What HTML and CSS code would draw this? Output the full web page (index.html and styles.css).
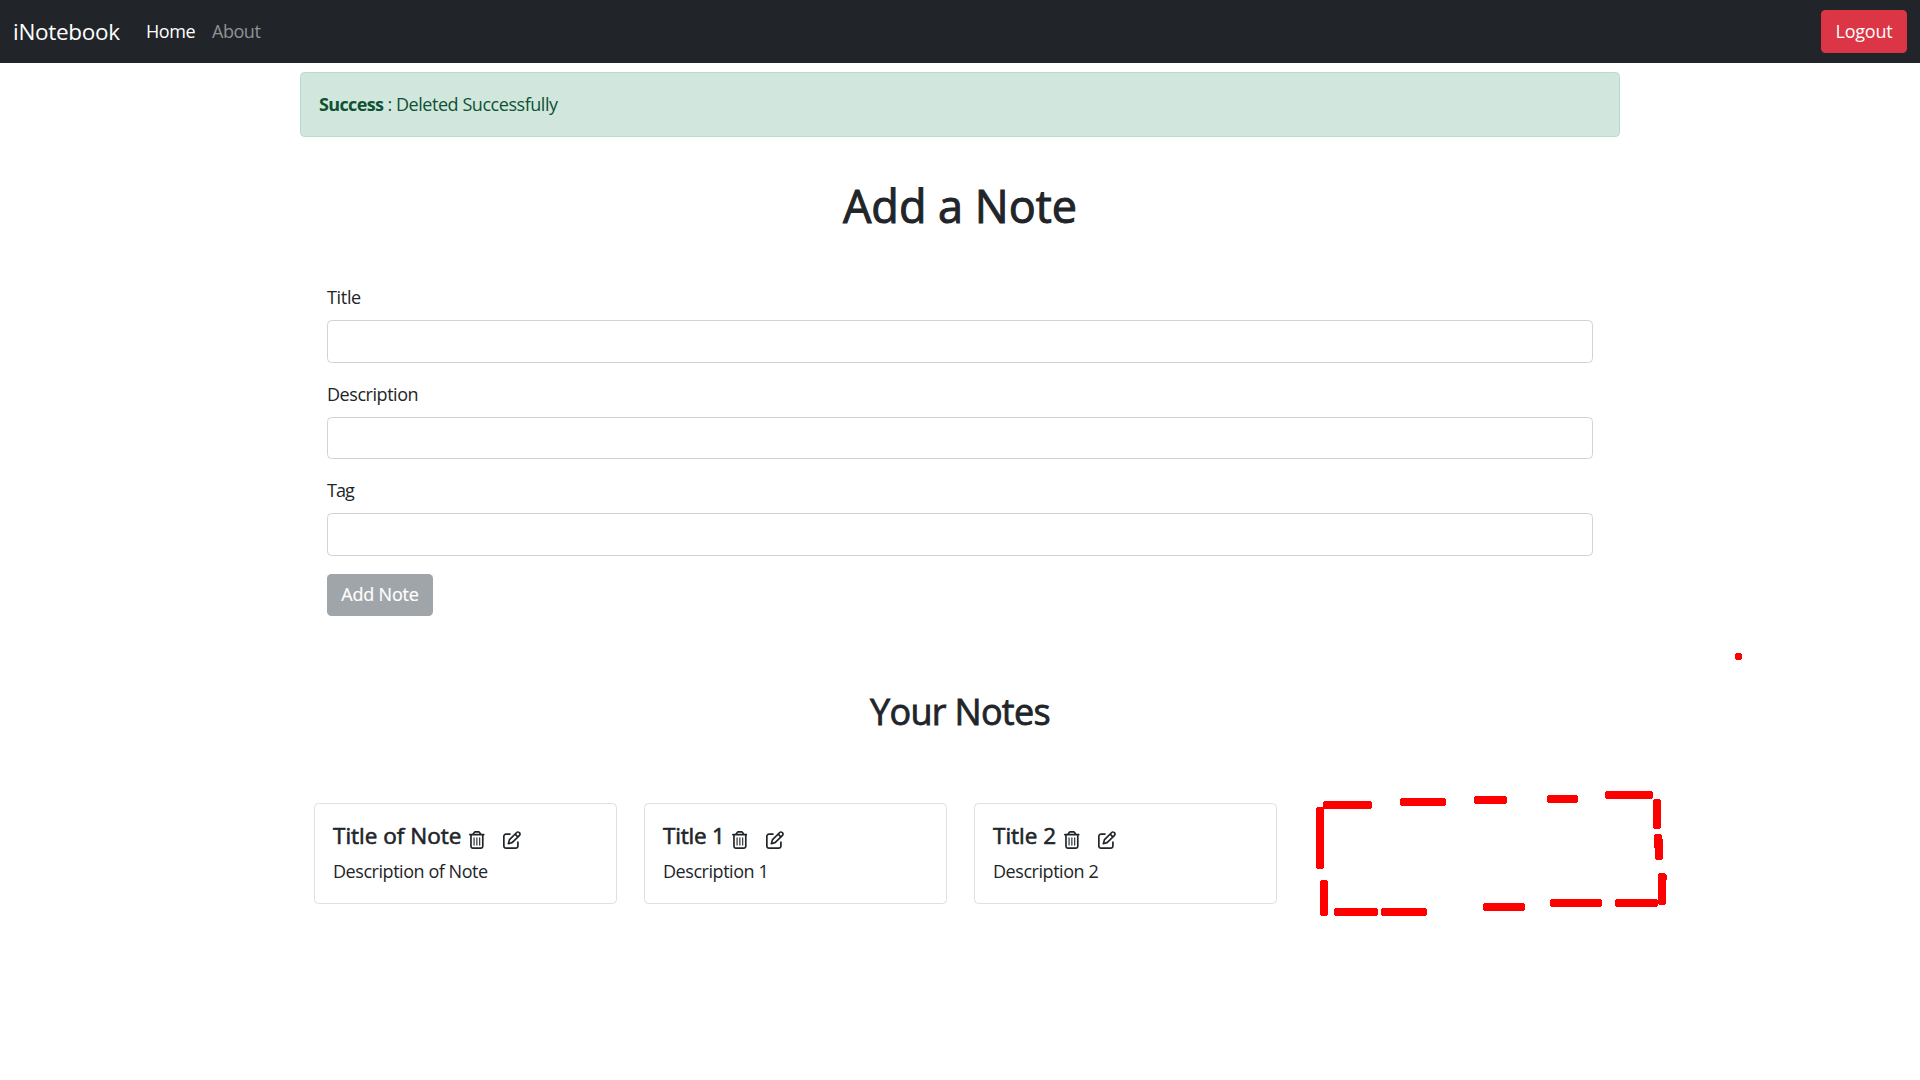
FILE: index.html
```
<!DOCTYPE html>
<html lang="en">
<head>
<meta charset="utf-8">
<title>iNotebook</title>
<link rel="stylesheet" href="styles.css">
</head>
<body>
<svg class="defs" aria-hidden="true">
  <symbol id="trash" viewBox="0 0 448 512"><path d="M170.500 51.600L151.500 80l145 0-19-28.400c-1.500-2.200-4-3.600-6.700-3.600l-93.700 0c-2.700 0-5.200 1.300-6.700 3.600zm147-26.600L354.200 80 368 80l48 0 8 0c13.300 0 24 10.700 24 24s-10.700 24-24 24l-8 0 0 304c0 44.200-35.800 80-80 80l-224 0c-44.200 0-80-35.800-80-80l0-304-8 0c-13.300 0-24-10.700-24-24S10.700 80 24 80l8 0 48 0 13.800 0 36.700-55.100C140.900 9.400 158.400 0 177.100 0l93.700 0c18.700 0 36.200 9.400 46.600 24.900zM80 128l0 304c0 17.700 14.300 32 32 32l224 0c17.700 0 32-14.300 32-32l0-304L80 128zm80 64l0 208c0 8.800-7.200 16-16 16s-16-7.200-16-16l0-208c0-8.800 7.200-16 16-16s16 7.200 16 16zm80 0l0 208c0 8.800-7.200 16-16 16s-16-7.200-16-16l0-208c0-8.800 7.200-16 16-16s16 7.200 16 16zm80 0l0 208c0 8.800-7.200 16-16 16s-16-7.200-16-16l0-208c0-8.800 7.200-16 16-16s16 7.200 16 16z"/></symbol>
  <symbol id="edit" viewBox="0 0 512 512"><path d="M441 58.900L453.100 71c9.400 9.400 9.400 24.600 0 33.900L424 134.100 377.900 88 407 58.900c9.400-9.400 24.600-9.400 33.900 0zM209.800 256.200L344 121.900 390.100 168 255.800 302.200c-2.900 2.900-6.500 5-10.400 6.100l-58.500 16.700 16.700-58.500c1.100-3.900 3.200-7.500 6.100-10.400zM373.100 25L175.800 222.200c-8.700 8.700-15 19.400-18.300 31.100l-28.600 100c-2.400 8.400-.1 17.400 6.100 23.600s15.200 8.500 23.600 6.100l100-28.600c11.800-3.400 22.500-9.700 31.100-18.300L487 138.900c28.100-28.100 28.100-73.700 0-101.800L474.900 25C446.800-3.100 401.200-3.100 373.100 25zM88 64C39.400 64 0 103.400 0 152V424c0 48.600 39.400 88 88 88H360c48.600 0 88-39.400 88-88V312c0-13.300-10.700-24-24-24s-24 10.700-24 24V424c0 22.100-17.900 40-40 40H88c-22.100 0-40-17.900-40-40V152c0-22.100 17.900-40 40-40H200c13.300 0 24-10.700 24-24s-10.700-24-24-24H88z"/></symbol>
</svg>
<nav class="navbar">
  <a class="brand">iNotebook</a>
  <a class="nav-link active">Home</a>
  <a class="nav-link">About</a>
  <button class="btn btn-danger">Logout</button>
</nav>
<main class="container">
  <div class="alert"><strong>Success</strong> <span>: Deleted Successfully</span></div>
  <h1>Add a Note</h1>
  <form class="form">
    <label class="label label-title" for="title">Title</label>
    <input class="input" id="title">
    <label class="label" for="description">Description</label>
    <input class="input input-description" id="description">
    <label class="label label-tag" for="tag">Tag</label>
    <input class="input" id="tag">
    <button class="btn btn-add" type="button" disabled>Add Note</button>
  </form>
  <h2>Your Notes</h2>
  <section class="notes">
    <article class="card">
      <div class="card-head"><h5>Title of Note</h5><svg class="trash"><use href="#trash"/></svg><svg class="edit"><use href="#edit"/></svg></div>
      <p>Description of Note</p>
    </article>
    <article class="card">
      <div class="card-head"><h5 class="short">Title 1</h5><svg class="trash"><use href="#trash"/></svg><svg class="edit"><use href="#edit"/></svg></div>
      <p>Description 1</p>
    </article>
    <article class="card">
      <div class="card-head"><h5>Title 2</h5><svg class="trash"><use href="#trash"/></svg><svg class="edit"><use href="#edit"/></svg></div>
      <p>Description 2</p>
    </article>
  </section>
</main>
<svg class="marker" viewBox="0 0 1920 1080">
  <rect x="1323" y="801" width="49" height="8" rx="2.500"/>
  <rect x="1400" y="798" width="46" height="8" rx="2.500"/>
  <rect x="1474" y="796" width="33" height="8" rx="2.500"/>
  <rect x="1547" y="795" width="31" height="8" rx="2.500"/>
  <rect x="1605" y="791" width="48" height="8" rx="2.500"/>
  <rect x="1653" y="799" width="8" height="30" rx="2.500"/>
  <rect x="1654" y="834" width="8" height="15" rx="2.500"/>
  <rect x="1655" y="838" width="8" height="22" rx="2.500"/>
  <rect x="1658" y="873" width="8" height="32" rx="2.500"/>
  <rect x="1660" y="875" width="7" height="5" rx="1"/>
  <rect x="1316" y="807" width="8" height="62" rx="2.500"/>
  <rect x="1320" y="880" width="8" height="36" rx="2.500"/>
  <rect x="1334" y="908" width="44" height="8" rx="2.500"/>
  <rect x="1381" y="908" width="46" height="8" rx="2.500"/>
  <rect x="1483" y="903" width="42" height="8" rx="2.500"/>
  <rect x="1550" y="899" width="52" height="8" rx="2.500"/>
  <rect x="1615" y="899" width="43" height="8" rx="2.500"/>
  <rect x="1735" y="653" width="7" height="7" rx="2.200"/>
</svg>
</body>
</html>
```
FILE: styles.css
```
* { box-sizing: border-box; }
body {
  margin: 0;
  height: 1080px;
  overflow: hidden;
  background: #fff;
  color: #212529;
  font: 400 18px/27px "Open Sans", "Segoe UI", sans-serif;
  letter-spacing: -0.45px;
}
.defs { display: none; }
h1, h2, h5, p { margin: 0; font-weight: 400; }

.navbar {
  display: flex;
  align-items: center;
  height: 63px;
  padding: 0 13px;
  background: #212529;
}
.brand { width: 133px; font-size: 22.5px; letter-spacing: -0.3px; color: #fff; }
.nav-link { width: 66px; color: #909294; }
.nav-link.active { color: #fff; }
.btn {
  display: block;
  height: 43px;
  padding: 0;
  border: 0;
  border-radius: 4.5px;
  color: #fff;
  font: inherit;
  letter-spacing: -0.2px;
  text-align: center;
}
.btn-danger { width: 86px; margin-left: auto; background: #dc3545; }

.container { width: 1320px; margin: 9px auto 0; }
.alert {
  height: 65px;
  padding: 18px;
  border: 1px solid #badbcc;
  border-radius: 4.5px;
  background: #d1e7dd;
  color: #0f5132;
}
.alert strong { font-weight: 700; letter-spacing: -0.650px; }
h1 {
  margin-top: 42px;
  font-size: 45px;
  line-height: 54px;
  letter-spacing: 0;
  text-align: center;
  -webkit-text-stroke: 1px #212529;
}
.form { display: flex; flex-direction: column; margin: 51px 27px 0; }
.label { margin-bottom: 9px; }
.label-title { letter-spacing: -0.330px; }
.label-tag { letter-spacing: -0.9px; }
.input {
  height: 43px;
  margin: 0 0 18px;
  padding: 0;
  border: 1px solid #ced4da;
  border-radius: 4.5px;
  background: #fff;
}
.input-description { height: 42px; }
.btn-add { width: 106px; height: 42px; padding-bottom: 1px; background: #a0a5aa; -webkit-text-stroke: 0.2px #fff; }
h2 {
  margin-top: 74px;
  font-size: 36px;
  line-height: 43px;
  letter-spacing: -0.7px;
  text-align: center;
  -webkit-text-stroke: 0.8px #212529;
}
.notes {
  display: grid;
  grid-template-columns: repeat(4, 303px);
  gap: 27px;
  margin: 70px 0 0 14px;
}
.card {
  height: 101px;
  padding: 18px 18px;
  border: 1px solid #dfdfdf;
  border-radius: 4.5px;
}
.card-head { display: flex; height: 27px; margin-bottom: 9px; }
h5 {
  font-size: 22.5px;
  line-height: 27px;
  letter-spacing: 0;
  -webkit-text-stroke: 0.6px #212529;
}
h5.short { letter-spacing: -0.2px; margin-right: -1px; }
.trash, .edit { height: 18px; margin-top: 9px; fill: #212529; }
.trash { width: 15.750px; margin-left: 8px; }
.edit { width: 18px; margin-left: 18.200px; }

.marker {
  position: absolute;
  top: 0;
  left: 0;
  width: 1920px;
  height: 1080px;
  fill: #f00;
  pointer-events: none;
  shape-rendering: crispEdges;
}
```
